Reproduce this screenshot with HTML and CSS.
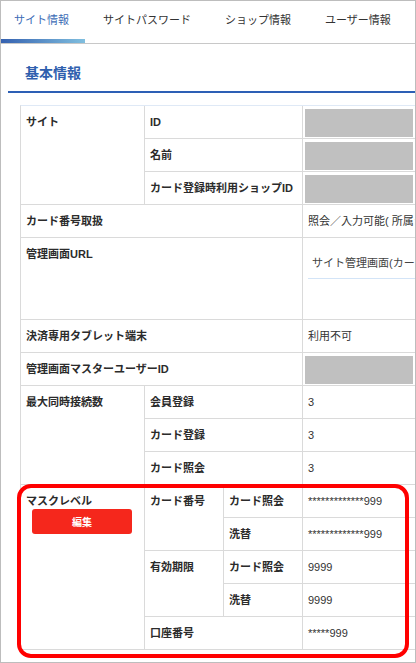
FILE: index.html
```html
<!DOCTYPE html>
<html lang="ja">

<head>
    <meta charset="UTF-8" />
    <title>サイト情報</title>
    <link rel="stylesheet" href="styles.css">
</head>

<body>
    <div class="frame">
        <ul class="tabs">
            <li class="tab active">サイト情報</li>
            <li class="tab">サイトパスワード</li>
            <li class="tab">ショップ情報</li>
            <li class="tab">ユーザー情報</li>
        </ul>

        <div class="section">
            <h2 class="section-title">基本情報</h2>

            <table class="info">
                <colgroup>
                    <col class="c1">
                    <col class="c2">
                    <col class="c3">
                    <col class="c4">
                </colgroup>
                <tr>
                    <th rowspan="3">サイト</th>
                    <th colspan="2">ID</th>
                    <td class="redact"><div class="mask"></div></td>
                </tr>
                <tr>
                    <th colspan="2">名前</th>
                    <td class="redact"><div class="mask"></div></td>
                </tr>
                <tr>
                    <th colspan="2">カード登録時利用ショップID</th>
                    <td class="redact"><div class="mask"></div></td>
                </tr>
                <tr>
                    <th colspan="3">カード番号取扱</th>
                    <td>照会／入力可能( 所属ショップの設定に従う )</td>
                </tr>
                <tr>
                    <th colspan="3">管理画面URL</th>
                    <td>
                        <div class="url-tab">サイト管理画面(カード会員情報照会)</div>
                        <div class="url-body"></div>
                    </td>
                </tr>
                <tr>
                    <th colspan="3">決済専用タブレット端末</th>
                    <td>利用不可</td>
                </tr>
                <tr>
                    <th colspan="3">管理画面マスターユーザーID</th>
                    <td class="redact"><div class="mask"></div></td>
                </tr>
                <tr>
                    <th rowspan="3">最大同時接続数</th>
                    <th colspan="2">会員登録</th>
                    <td>3</td>
                </tr>
                <tr>
                    <th colspan="2">カード登録</th>
                    <td>3</td>
                </tr>
                <tr>
                    <th colspan="2">カード照会</th>
                    <td>3</td>
                </tr>
                <tr>
                    <th rowspan="5">
                        マスクレベル
                        <button class="btn-edit">編集</button>
                    </th>
                    <th rowspan="2">カード番号</th>
                    <th>カード照会</th>
                    <td>*************999</td>
                </tr>
                <tr>
                    <th>洗替</th>
                    <td>*************999</td>
                </tr>
                <tr>
                    <th rowspan="2">有効期限</th>
                    <th>カード照会</th>
                    <td>9999</td>
                </tr>
                <tr>
                    <th>洗替</th>
                    <td>9999</td>
                </tr>
                <tr>
                    <th colspan="2">口座番号</th>
                    <td>*****999</td>
                </tr>
            </table>
        </div>

        <div class="highlight"></div>
    </div>
</body>

</html>
```

FILE: styles.css
```css
body {
    margin: 0;
    background: #fff;
    font-family: "Liberation Sans", "Noto Sans CJK JP", sans-serif;
    color: #333;
    font-size: 11px;
}
.frame {
    position: relative;
    width: 416px;
    height: 663px;
    box-sizing: border-box;
    border: 1px solid #bdbdbd;
    overflow: hidden;
}
.tabs {
    display: flex;
    gap: 5px;
    margin: 0;
    padding: 0;
    list-style: none;
    border-bottom: 1px solid #c8c8c8;
}
.tab {
    padding: 12px 16px 16px 13px;
    line-height: 14px;
    white-space: nowrap;
    color: #333;
}
.tab.active {
    color: #3d6cb6;
    background: linear-gradient(90deg, #3561b0 0%, #80bfdf 100%) left bottom / 100% 4px no-repeat;
}
.section {
    margin-left: 7px;
}
.section-title {
    margin: 0;
    padding: 19px 0 8px 17px;
    font-size: 14px;
    line-height: 20px;
    font-weight: bold;
    color: #2f5fae;
    border-bottom: 2px solid #2d5fb5;
}
.info {
    margin: 12px 0 0 12px;
    table-layout: fixed;
    width: 483px;
    border-collapse: separate;
    border-spacing: 0;
    border-top: 1px solid #dfe9f6;
    border-left: 1px solid #dadada;
}
.c1 { width: 124px; }
.c2 { width: 79px; }
.c3 { width: 79px; }
.c4 { width: 200px; }
.info th,
.info td {
    padding: 9px 5px;
    line-height: 14px;
    text-align: left;
    vertical-align: top;
    white-space: nowrap;
    overflow: hidden;
    border-right: 1px solid #dadada;
    border-bottom: 1px solid #dadada;
}
.info th {
    font-weight: bold;
    color: #2b2b2b;
}
.info td {
    font-weight: normal;
    color: #333;
}
.info td.redact {
    padding: 3px 2px 1px 2px;
}
.mask {
    width: 108px;
    height: 28px;
    background: #c0c0c0;
}
.url-tab {
    padding: 9px 4px 8px 4px;
    border-bottom: 1px solid #d3e4f7;
    color: #444;
}
.url-body {
    height: 31px;
}
.btn-edit {
    display: block;
    width: 100px;
    height: 25px;
    margin: 1px 0 0 6px;
    padding: 0;
    border: none;
    border-radius: 3px;
    background: #f5271c;
    color: #fff;
    font-family: "Noto Sans CJK JP", sans-serif;
    font-size: 10px;
    font-weight: bold;
}
.highlight {
    position: absolute;
    left: 16px;
    top: 483px;
    width: 392px;
    height: 174px;
    box-sizing: border-box;
    border: 4px solid #ff0000;
    border-radius: 14px;
    pointer-events: none;
}
```
